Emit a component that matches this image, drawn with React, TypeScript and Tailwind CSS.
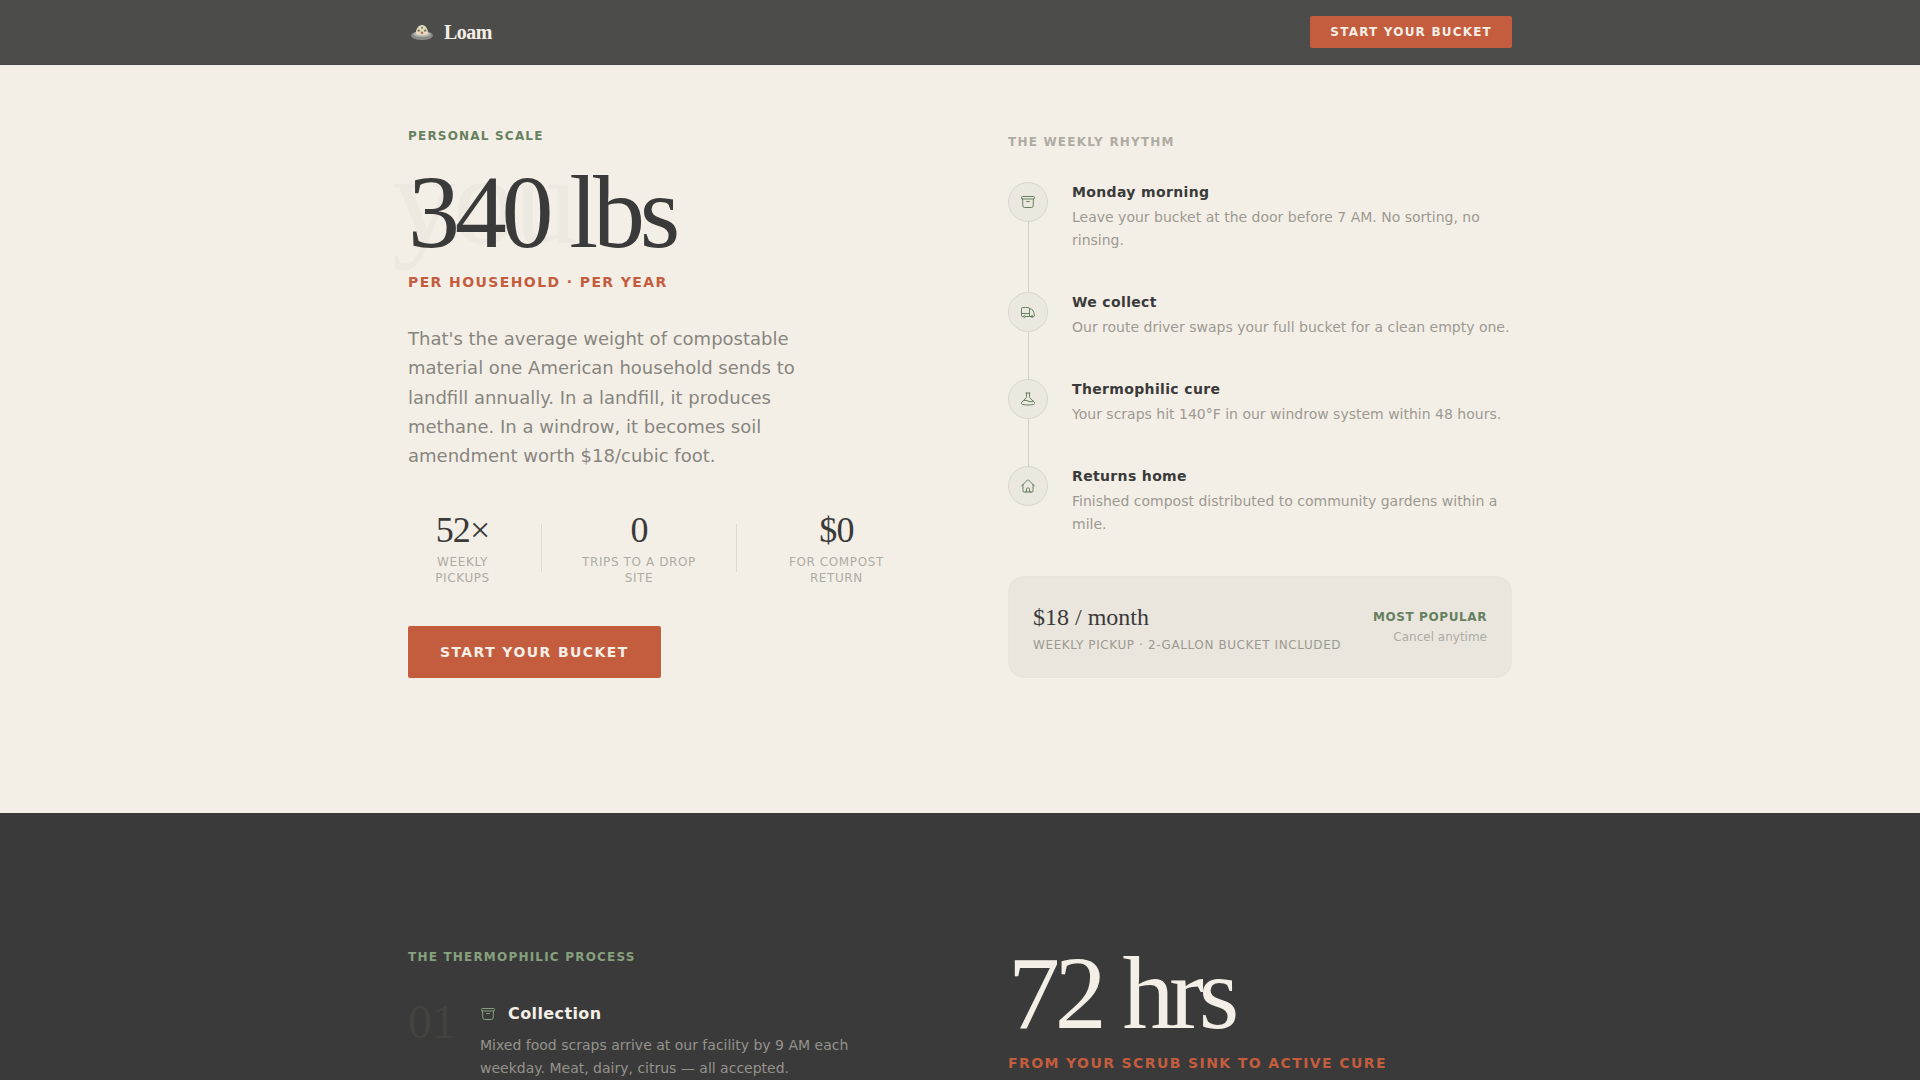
import React from "react";
import {
  HiOutlineArchiveBox,
  HiOutlineBeaker,
  HiOutlineHome,
  HiOutlineTruck,
} from "react-icons/hi2";

const stats = [
  { value: "52×", label: "Weekly pickups" },
  { value: "0", label: "Trips to a drop site" },
  { value: "$0", label: "For compost return" },
];

const rhythm = [
  {
    icon: HiOutlineArchiveBox,
    title: "Monday morning",
    text: "Leave your bucket at the door before 7 AM. No sorting, no rinsing.",
  },
  {
    icon: HiOutlineTruck,
    title: "We collect",
    text: "Our route driver swaps your full bucket for a clean empty one.",
  },
  {
    icon: HiOutlineBeaker,
    title: "Thermophilic cure",
    text: "Your scraps hit 140°F in our windrow system within 48 hours.",
  },
  {
    icon: HiOutlineHome,
    title: "Returns home",
    text: "Finished compost distributed to community gardens within a mile.",
  },
];

const Logo: React.FC = () => (
  <svg viewBox="0 0 28 28" className="h-7 w-7" aria-hidden="true">
    <ellipse cx="14" cy="17.5" rx="11" ry="4.5" fill="#8b8c89" />
    <ellipse cx="14" cy="16.2" rx="8.5" ry="2.8" fill="#b3b3ad" />
    <path d="M7.8 16c0-5 2.6-9 6.2-9s6.2 4 6.2 9c-1.6 1.7-10.8 1.7-12.4 0z" fill="#e0d9bf" />
    <circle cx="10.8" cy="12.6" r="1.2" fill="#7d7a52" />
    <circle cx="14" cy="9.8" r="1.1" fill="#7d7a52" />
    <circle cx="17.2" cy="12.6" r="1.2" fill="#7d7a52" />
    <circle cx="14" cy="14.8" r="1.2" fill="#b5654a" />
  </svg>
);

const Nav: React.FC = () => (
  <header className="border-b border-[#464644] bg-[#4c4c4a]">
    <div className="mx-auto flex h-16 max-w-[1200px] items-center justify-between px-12">
      <a
        href="#"
        className="flex items-center gap-2 font-['Liberation_Serif',serif] text-xl font-bold tracking-tight text-[#f4efe6]"
      >
        <Logo />
        Loam
      </a>
      <button
        type="button"
        className="rounded-[2px] bg-[#c45c3e] px-5 py-2 text-xs font-bold tracking-widest text-[#f4efe6] uppercase"
      >
        Start your bucket
      </button>
    </div>
  </header>
);

const PersonalScale: React.FC = () => (
  <div>
    <p className="text-xs font-bold tracking-widest text-[#678060] uppercase">
      Personal scale
    </p>
    <div className="relative mt-4">
      <span
        aria-hidden="true"
        className="absolute -top-6 -left-4 font-['Liberation_Serif',serif] text-[128px] leading-none tracking-tight text-[#ede9e0] select-none"
      >
        you
      </span>
      <h1 className="relative font-['Liberation_Serif',serif] text-[104px] leading-none tracking-tighter text-[#3a3a3a]">
        340 lbs
      </h1>
    </div>
    <p className="mt-2 text-sm font-bold tracking-widest text-[#c45c3e] uppercase">
      Per household · Per year
    </p>
    <p className="mt-8 max-w-[400px] text-lg leading-relaxed text-[#87857f]">
      That's the average weight of compostable material one American household
      sends to landfill annually. In a landfill, it produces methane. In a
      windrow, it becomes soil amendment worth $18/cubic foot.
    </p>

    <div className="mt-10 flex items-center gap-6">
      {stats.map((stat, i) => (
        <React.Fragment key={stat.label}>
          {i > 0 && <div className="h-12 w-px shrink-0 bg-[#dedad2]" />}
          <div className="text-center">
            <div className="font-['Liberation_Serif',serif] text-4xl tracking-tight text-[#3a3a3a]">
              {stat.value}
            </div>
            <div className="mt-1 text-xs tracking-wider text-[#aeaba4] uppercase">
              {stat.label}
            </div>
          </div>
        </React.Fragment>
      ))}
    </div>

    <button
      type="button"
      className="mt-10 rounded-[2px] bg-[#c45c3e] px-8 py-4 text-sm font-bold tracking-widest text-[#f4efe6] uppercase"
    >
      Start your bucket
    </button>
  </div>
);

const WeeklyRhythm: React.FC = () => (
  <div>
    <h2 className="text-xs font-bold tracking-widest text-[#aeaba4] uppercase">
      The weekly rhythm
    </h2>
    <ol className="mt-8">
      {rhythm.map(({ icon: Icon, title, text }, i) => (
        <li key={title} className="flex gap-6">
          <div className="flex flex-col items-center">
            <div className="flex h-10 w-10 shrink-0 items-center justify-center rounded-full border border-[#d9d6cd] bg-[#ebe8df]">
              <Icon className="h-4 w-4 text-[#678060]" />
            </div>
            {i < rhythm.length - 1 && <div className="w-px flex-1 bg-[#d3cfc7]" />}
          </div>
          <div className="flex-1 pb-10">
            <h3 className="text-sm font-bold tracking-wide text-[#3a3a3a]">{title}</h3>
            <p className="mt-1 text-sm leading-[23px] text-[#9c9992]">{text}</p>
          </div>
        </li>
      ))}
    </ol>

    <div className="flex items-center justify-between rounded-2xl border border-[#e8e4db] bg-[#eae6dd] p-6">
      <div>
        <div className="font-['Liberation_Serif',serif] text-2xl text-[#3a3a3a]">
          $18 / month
        </div>
        <div className="mt-1 text-xs tracking-wider text-[#9c9992] uppercase">
          Weekly pickup · 2-gallon bucket included
        </div>
      </div>
      <div className="text-right text-xs">
        <div className="font-bold tracking-wider text-[#678060] uppercase">
          Most popular
        </div>
        <div className="mt-1 text-[#aeaba4]">Cancel anytime</div>
      </div>
    </div>
  </div>
);

const Process: React.FC = () => (
  <section className="bg-[#3a3a3a]">
    <div className="mx-auto grid max-w-[1200px] grid-cols-2 gap-24 px-12 py-32">
      <div className="pt-2">
        <h2 className="text-xs font-bold tracking-widest text-[#87a07e] uppercase">
          The thermophilic process
        </h2>
        <div className="mt-[33px] flex gap-6">
          <div className="w-12 shrink-0 font-['Liberation_Serif',serif] text-5xl text-[#434340]">
            01
          </div>
          <div className="pt-1">
            <div className="flex items-center gap-3">
              <HiOutlineArchiveBox className="h-4 w-4 text-[#87a07e]" />
              <h3 className="text-base font-bold tracking-wide text-[#f4efe6]">
                Collection
              </h3>
            </div>
            <p className="mt-2 max-w-96 text-sm leading-[23px] text-[#95928c]">
              Mixed food scraps arrive at our facility by 9 AM each weekday.
              Meat, dairy, citrus — all accepted.
            </p>
          </div>
        </div>
      </div>
      <div>
        <div className="font-['Liberation_Serif',serif] text-[104px] leading-none tracking-tighter text-[#f4efe6]">
          72 hrs
        </div>
        <p className="mt-2 text-sm font-bold tracking-widest text-[#c45c3e] uppercase">
          From your scrub sink to active cure
        </p>
      </div>
    </div>
  </section>
);

export default function App() {
  return (
    <div className="min-h-screen bg-[#f4efe6] font-['DejaVu_Sans',sans-serif]">
      <Nav />
      <section className="mx-auto grid max-w-[1200px] grid-cols-2 items-end gap-24 px-12 pt-[63px] pb-[135px]">
        <PersonalScale />
        <WeeklyRhythm />
      </section>
      <Process />
    </div>
  );
}
